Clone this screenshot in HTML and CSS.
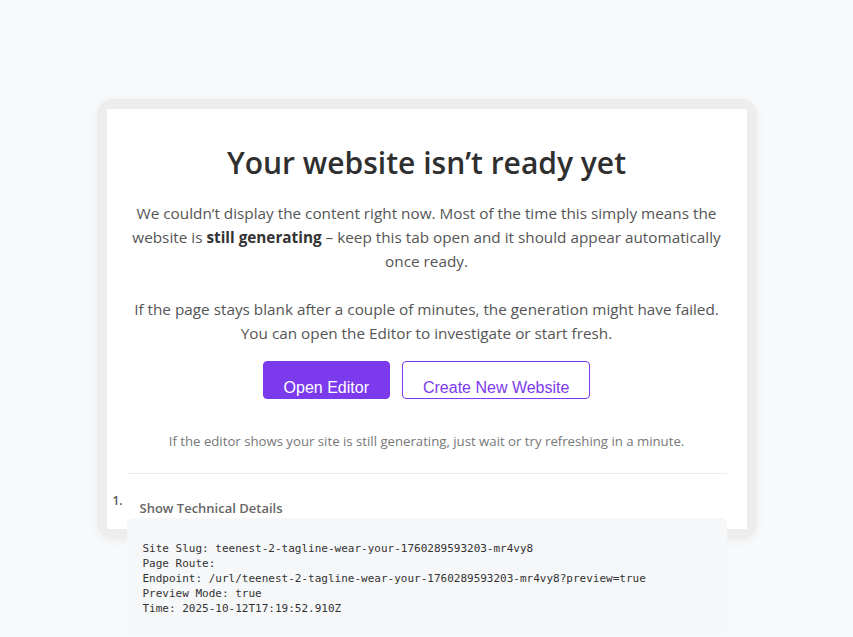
FILE: index.html
```html
<!DOCTYPE html>
<html lang="en">
<head>
<meta charset="utf-8">
<title>Your website isn’t ready yet</title>
<link rel="stylesheet" href="styles.css">
</head>
<body>
<main class="page">
  <div class="frame">
    <section class="card">
      <h1 class="title">Your website isn’t ready yet</h1>
      <p class="lead">We couldn’t display the content right now. Most of the time this simply means the website is <strong>still generating</strong> – keep this tab open and it should appear automatically once ready.</p>
      <p class="lead lead-second">If the page stays blank after a couple of minutes, the generation might have failed. You can open the Editor to investigate or start fresh.</p>
      <div class="actions">
        <a class="btn btn-primary" href="#">Open Editor</a>
        <a class="btn btn-outline" href="#">Create New Website</a>
      </div>
      <p class="note">If the editor shows your site is still generating, just wait or try refreshing in a minute.</p>
      <hr class="divider">
      <div class="details">
        <div class="summary-row">
          <span class="marker">1.</span>
          <span class="summary">Show Technical Details</span>
        </div>
        <pre class="tech">Site Slug: teenest-2-tagline-wear-your-1760289593203-mr4vy8
Page Route: 
Endpoint: /url/teenest-2-tagline-wear-your-1760289593203-mr4vy8?preview=true
Preview Mode: true
Time: 2025-10-12T17:19:52.910Z</pre>
      </div>
    </section>
  </div>
</main>
</body>
</html>
```

FILE: styles.css
```css
* { box-sizing: border-box; }

html, body {
  margin: 0;
  padding: 0;
}

body {
  background: #f8f9fb;
  font-family: "Open Sans", "Noto Sans", sans-serif;
  color: #333;
}

.page {
  min-height: 100vh;
  display: flex;
  align-items: center;
  justify-content: center;
}

.frame {
  width: 660px;
  padding: 10px;
  border-radius: 16px;
  background: #ededed;
  box-shadow: 0 2px 10px rgba(0, 0, 0, 0.05);
}

.card {
  height: 420px;
  background: #ffffff;
  padding: 35px 20px 0;
  text-align: center;
}

.title {
  margin: 0;
  font-size: 30px;
  line-height: 38px;
  font-weight: 600;
  color: #2f2f2f;
}

.lead {
  margin: 19px 0 0;
  font-size: 15.3px;
  line-height: 24px;
  color: #555;
}

.lead strong {
  font-weight: 700;
  color: #333;
}

.lead-second {
  margin-top: 24px;
}

.actions {
  display: flex;
  justify-content: center;
  gap: 12px;
  margin-top: 16px;
}

.btn {
  display: inline-block;
  font-family: "Liberation Sans", Arial, sans-serif;
  font-size: 16px;
  line-height: 18px;
  padding: 17px 20px 1px;
  border-radius: 4px;
  text-decoration: none;
  border: 1px solid #7c3aed;
}

.btn-primary {
  background: #7c3aed;
  color: #fff;
}

.btn-outline {
  background: #fff;
  color: #7c3aed;
}

.note {
  margin: 32px 0 0;
  font-size: 13.2px;
  line-height: 20px;
  color: #777;
}

.divider {
  margin: 22px 0 0;
  border: 0;
  border-top: 1px solid #eeeeee;
}

.details {
  text-align: left;
  margin-top: 16px;
}

.summary-row {
  display: flex;
  align-items: flex-start;
}

.marker {
  margin-left: -14px;
  width: 27px;
  padding-top: 1px;
  font-size: 12px;
  line-height: 20px;
  font-weight: 600;
  color: #555;
}

.summary {
  padding-top: 8px;
  font-size: 13px;
  line-height: 20px;
  font-weight: 600;
  color: #666;
}

.tech {
  margin: 0;
  padding: 23px 16px 20px;
  background: #f6f7f9;
  border-radius: 6px;
  font-family: "DejaVu Sans Mono", "Liberation Mono", monospace;
  font-size: 11px;
  line-height: 15px;
  color: #333;
}
```
